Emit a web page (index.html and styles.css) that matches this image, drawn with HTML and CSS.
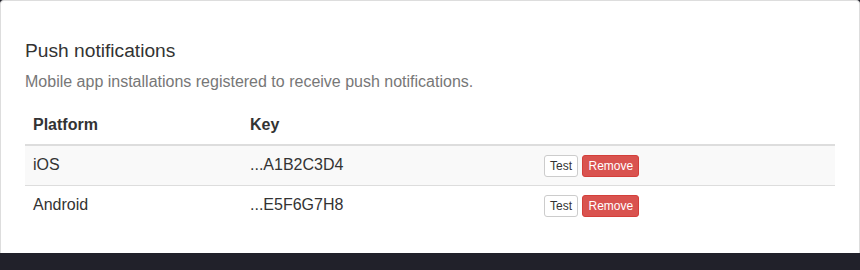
FILE: index.html
```html
<!DOCTYPE html>
<html lang="en">
<head>
  <meta charset="UTF-8">
  <title>Push notifications</title>
  <link rel="stylesheet" href="styles.css">
</head>
<body>
  <div class="panel">
    <h2>Push notifications</h2>
    <p class="help">Mobile app installations registered to receive push notifications.</p>

    <table class="devices">
      <thead>
        <tr>
          <th class="col-platform">Platform</th>
          <th class="col-key">Key</th>
          <th></th>
        </tr>
      </thead>
      <tbody>
        <tr class="striped">
          <td>iOS</td>
          <td>...A1B2C3D4</td>
          <td><button class="btn btn-default">Test</button> <button class="btn btn-danger">Remove</button></td>
        </tr>
        <tr>
          <td>Android</td>
          <td>...E5F6G7H8</td>
          <td><button class="btn btn-default">Test</button> <button class="btn btn-danger">Remove</button></td>
        </tr>
      </tbody>
    </table>
  </div>
  <div class="footer"></div>
</body>
</html>
```

FILE: styles.css
```css
body {
  font-family: "Liberation Sans", Arial, sans-serif;
  font-size: 16px;
  margin: 0;
  background-color: #21212a;
  color: #333;
}
.panel {
  background-color: #fff;
  border: 1px solid #ddd;
  border-bottom: none;
  border-radius: 4px 4px 0 0;
  padding: 38px 24px 28px;
}
.panel h2 {
  font-size: 19.2px;
  font-weight: normal;
  line-height: 23px;
  margin: 0 0 8px;
}
.help {
  color: #777;
  line-height: 24px;
  margin: 0 0 12px;
}
.devices {
  width: 100%;
  border-collapse: collapse;
  border-spacing: 0;
}
.devices th,
.devices td {
  text-align: left;
  padding: 8px;
  line-height: 22px;
  vertical-align: middle;
}
.devices th {
  font-weight: bold;
  border-bottom: 2px solid #ddd;
}
.devices td {
  border-top: 1px solid #ddd;
}
.col-platform {
  width: 201px;
}
.col-key {
  width: 278px;
}
.striped td {
  background-color: #f9f9f9;
}
.btn {
  font-family: inherit;
  font-size: 12px;
  line-height: 18px;
  padding: 1px 5px;
  border: 1px solid #ccc;
  border-radius: 3px;
  vertical-align: middle;
  cursor: pointer;
}
.btn-default {
  background-color: #fff;
  color: #333;
}
.btn-danger {
  background-color: #d9534f;
  border-color: #d43f3a;
  color: #fff;
}
.footer {
  height: 18px;
  background-color: #21212a;
}
```
